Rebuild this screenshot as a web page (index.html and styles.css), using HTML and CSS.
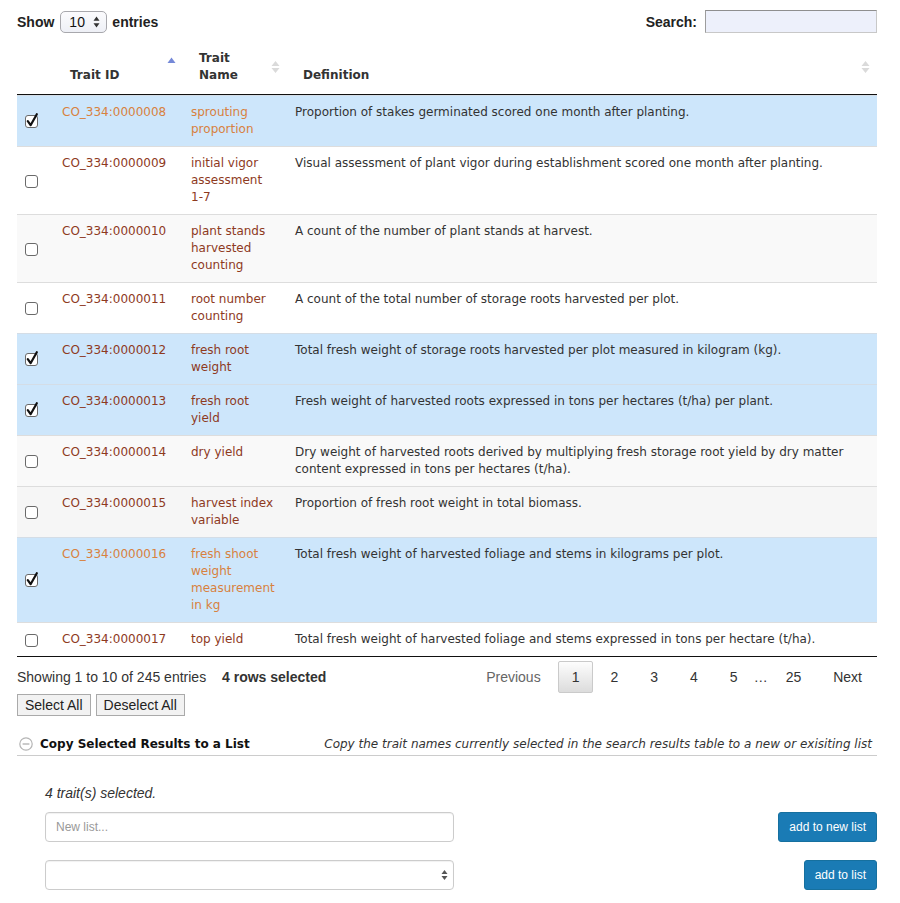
FILE: index.html
```html
<!DOCTYPE html>
<html>
<head>
<meta charset="utf-8">
<link rel="stylesheet" href="styles.css">
</head>
<body>
<div class="page">
  <div class="topbar">
    <label class="length">Show
      <span class="selectbox"><span class="selval">10</span>
        <svg class="updown" width="7" height="12" viewBox="0 0 7 12"><path d="M3.5 0.5 L6.5 4.8 L0.5 4.8 Z M0.5 7.2 L6.5 7.2 L3.5 11.5 Z" fill="#333"/></svg>
      </span> entries</label>
    <label class="search">Search: <span class="searchbox"></span></label>
  </div>

  <table class="traits">
    <colgroup>
      <col class="c-check"><col class="c-id"><col class="c-name"><col class="c-def">
    </colgroup>
    <thead>
      <tr>
        <th></th>
        <th class="sortable">Trait ID
          <svg class="sort" width="9" height="14" viewBox="0 0 9 14"><path d="M4.5 0.5 L8.5 6 L0.5 6 Z" fill="#7589d8"/></svg>
        </th>
        <th class="sortable">Trait<br>Name
          <svg class="sort" width="9" height="14" viewBox="0 0 9 14"><path d="M4.5 1 L8.5 6 L0.5 6 Z M0.5 8 L8.5 8 L4.5 13 Z" fill="#dadada"/></svg>
        </th>
        <th class="sortable">Definition
          <svg class="sort" width="9" height="14" viewBox="0 0 9 14"><path d="M4.5 1 L8.5 6 L0.5 6 Z M0.5 8 L8.5 8 L4.5 13 Z" fill="#dadada"/></svg>
        </th>
      </tr>
    </thead>
    <tbody>
      <tr class="odd selected">
        <td class="cb-cell"><span class="cb"><svg width="14" height="16" viewBox="0 0 14 16"><rect x="0.5" y="2.5" width="12" height="12" rx="2.5" fill="#fff" stroke="#6a6a6a"/><path d="M2.8 8.2 L5.6 12.2 L11.8 1.2" fill="none" stroke="#111" stroke-width="2.2" stroke-linecap="round" stroke-linejoin="round"/></svg></span></td>
        <td><a class="lnk hot">CO_334:0000008</a></td>
        <td class="name"><a class="lnk hot">sprouting proportion</a></td>
        <td>Proportion of stakes germinated scored one month after planting.</td>
      </tr>
      <tr class="even">
        <td class="cb-cell"><span class="cb"><svg width="14" height="16" viewBox="0 0 14 16"><rect x="0.5" y="2.5" width="12" height="12" rx="2.5" fill="#fff" stroke="#6a6a6a"/></svg></span></td>
        <td><a class="lnk">CO_334:0000009</a></td>
        <td class="name"><a class="lnk">initial vigor assessment 1-7</a></td>
        <td>Visual assessment of plant vigor during establishment scored one month after planting.</td>
      </tr>
      <tr class="odd">
        <td class="cb-cell"><span class="cb"><svg width="14" height="16" viewBox="0 0 14 16"><rect x="0.5" y="2.5" width="12" height="12" rx="2.5" fill="#fff" stroke="#6a6a6a"/></svg></span></td>
        <td><a class="lnk">CO_334:0000010</a></td>
        <td class="name"><a class="lnk">plant stands harvested counting</a></td>
        <td>A count of the number of plant stands at harvest.</td>
      </tr>
      <tr class="even">
        <td class="cb-cell"><span class="cb"><svg width="14" height="16" viewBox="0 0 14 16"><rect x="0.5" y="2.5" width="12" height="12" rx="2.5" fill="#fff" stroke="#6a6a6a"/></svg></span></td>
        <td><a class="lnk">CO_334:0000011</a></td>
        <td class="name"><a class="lnk">root number counting</a></td>
        <td>A count of the total number of storage roots harvested per plot.</td>
      </tr>
      <tr class="odd selected">
        <td class="cb-cell"><span class="cb"><svg width="14" height="16" viewBox="0 0 14 16"><rect x="0.5" y="2.5" width="12" height="12" rx="2.5" fill="#fff" stroke="#6a6a6a"/><path d="M2.8 8.2 L5.6 12.2 L11.8 1.2" fill="none" stroke="#111" stroke-width="2.2" stroke-linecap="round" stroke-linejoin="round"/></svg></span></td>
        <td><a class="lnk">CO_334:0000012</a></td>
        <td class="name"><a class="lnk">fresh root weight</a></td>
        <td>Total fresh weight of storage roots harvested per plot measured in kilogram (kg).</td>
      </tr>
      <tr class="even selected">
        <td class="cb-cell"><span class="cb"><svg width="14" height="16" viewBox="0 0 14 16"><rect x="0.5" y="2.5" width="12" height="12" rx="2.5" fill="#fff" stroke="#6a6a6a"/><path d="M2.8 8.2 L5.6 12.2 L11.8 1.2" fill="none" stroke="#111" stroke-width="2.2" stroke-linecap="round" stroke-linejoin="round"/></svg></span></td>
        <td><a class="lnk">CO_334:0000013</a></td>
        <td class="name"><a class="lnk">fresh root yield</a></td>
        <td>Fresh weight of harvested roots expressed in tons per hectares (t/ha) per plant.</td>
      </tr>
      <tr class="odd">
        <td class="cb-cell"><span class="cb"><svg width="14" height="16" viewBox="0 0 14 16"><rect x="0.5" y="2.5" width="12" height="12" rx="2.5" fill="#fff" stroke="#6a6a6a"/></svg></span></td>
        <td><a class="lnk">CO_334:0000014</a></td>
        <td class="name"><a class="lnk">dry yield</a></td>
        <td>Dry weight of harvested roots derived by multiplying fresh storage root yield by dry matter content expressed in tons per hectares (t/ha).</td>
      </tr>
      <tr class="even hover">
        <td class="cb-cell"><span class="cb"><svg width="14" height="16" viewBox="0 0 14 16"><rect x="0.5" y="2.5" width="12" height="12" rx="2.5" fill="#fff" stroke="#6a6a6a"/></svg></span></td>
        <td><a class="lnk">CO_334:0000015</a></td>
        <td class="name"><a class="lnk">harvest index variable</a></td>
        <td>Proportion of fresh root weight in total biomass.</td>
      </tr>
      <tr class="odd selected">
        <td class="cb-cell"><span class="cb"><svg width="14" height="16" viewBox="0 0 14 16"><rect x="0.5" y="2.5" width="12" height="12" rx="2.5" fill="#fff" stroke="#6a6a6a"/><path d="M2.8 8.2 L5.6 12.2 L11.8 1.2" fill="none" stroke="#111" stroke-width="2.2" stroke-linecap="round" stroke-linejoin="round"/></svg></span></td>
        <td><a class="lnk hot">CO_334:0000016</a></td>
        <td class="name"><a class="lnk hot">fresh shoot weight measurement in kg</a></td>
        <td>Total fresh weight of harvested foliage and stems in kilograms per plot.</td>
      </tr>
      <tr class="even">
        <td class="cb-cell"><span class="cb"><svg width="14" height="16" viewBox="0 0 14 16"><rect x="0.5" y="2.5" width="12" height="12" rx="2.5" fill="#fff" stroke="#6a6a6a"/></svg></span></td>
        <td><a class="lnk">CO_334:0000017</a></td>
        <td class="name"><a class="lnk">top yield</a></td>
        <td>Total fresh weight of harvested foliage and stems expressed in tons per hectare (t/ha).</td>
      </tr>
    </tbody>
  </table>

  <div class="tablefoot">
    <div class="info">Showing 1 to 10 of 245 entries <span class="selinfo">4 rows selected</span></div>
    <div class="paginate">
      <span class="pbtn disabled">Previous</span>
      <span class="pbtn current">1</span>
      <span class="pbtn">2</span>
      <span class="pbtn">3</span>
      <span class="pbtn">4</span>
      <span class="pbtn">5</span>
      <span class="ellipsis">…</span>
      <span class="pbtn">25</span>
      <span class="pbtn">Next</span>
    </div>
  </div>

  <div class="selbtns">
    <button class="plain">Select All</button>
    <button class="plain">Deselect All</button>
  </div>

  <div class="copyhead">
    <div class="copytitle">
      <svg class="minus" width="14" height="14" viewBox="0 0 14 14"><circle cx="7" cy="7" r="6.2" fill="#fff" stroke="#b5b5b5" stroke-width="1.2"/><rect x="3.6" y="6.3" width="6.8" height="1.4" fill="#b5b5b5"/></svg>
      <span>Copy Selected Results to a List</span>
    </div>
    <div class="copynote">Copy the trait names currently selected in the search results table to a new or exisiting list</div>
  </div>

  <div class="listpanel">
    <div class="count">4 trait(s) selected.</div>
    <div class="formrow">
      <div class="field">New list...</div>
      <button class="primary">add to new list</button>
    </div>
    <div class="formrow">
      <div class="field select">
        <svg width="7" height="12" viewBox="0 0 7 12"><path d="M3.5 1 L6.5 5 L0.5 5 Z M0.5 7 L6.5 7 L3.5 11 Z" fill="#555"/></svg>
      </div>
      <button class="primary">add to list</button>
    </div>
  </div>
</div>
</body>
</html>
```

FILE: styles.css
```css
html, body {
  margin: 0;
  padding: 0;
  background: #fff;
}
body {
  font-family: "Liberation Sans", Arial, sans-serif;
  font-size: 14px;
  color: #333;
}
.page {
  padding: 10px 23px 10px 17px;
  width: 860px;
}

/* top bar */
.topbar {
  display: flex;
  justify-content: space-between;
  align-items: center;
  height: 23px;
}
.length, .search {
  font-weight: bold;
  display: flex;
  align-items: center;
  color: #222;
}
.selectbox {
  display: inline-flex;
  align-items: center;
  justify-content: space-between;
  box-sizing: border-box;
  width: 47px;
  height: 22px;
  margin: 0 5px 0 6px;
  padding: 0 6px 0 8px;
  border: 1px solid #a8a8ad;
  border-radius: 5px;
  background: linear-gradient(#fbfbfd, #eef0f6);
  font-weight: normal;
  color: #111;
}
.searchbox {
  display: inline-block;
  box-sizing: border-box;
  width: 172px;
  height: 23px;
  margin-left: 8px;
  border: 1px solid #c8c8c8;
  border-top-color: #8f8f8f;
  border-left-color: #9d9d9d;
  background: #edf0fb;
}

/* table */
.traits {
  width: 860px;
  margin-top: 7px;
  table-layout: fixed;
  border-collapse: separate;
  border-spacing: 0;
  font-family: "DejaVu Sans", Verdana, sans-serif;
  font-size: 12px;
  line-height: 17px;
  color: #333;
  border-bottom: 1px solid #111;
}
.c-check { width: 37px; }
.c-id { width: 129px; }
.c-name { width: 104px; }
.c-def { width: 590px; }

.traits th {
  position: relative;
  text-align: left;
  vertical-align: bottom;
  font-weight: bold;
  color: #333;
  padding: 10px 18px 10px 16px;
  border-bottom: 1px solid #111;
}
.traits th .sort {
  position: absolute;
  right: 7px;
  top: 50%;
  margin-top: -7px;
}
.traits th:nth-child(2) .sort { margin-top: -10px; }

.traits td {
  padding: 8px 8px;
  vertical-align: top;
  border-top: 1px solid #ddd;
}
.traits td.name { padding-right: 10.5px; }
.traits tr.odd td { background: #f9f9f9; }
.traits tr.even td { background: #fff; }
.traits tr.hover td { background: #f6f6f6; }
.traits tr.selected td { background: #cde6fb; border-top-color: #d4dde6; }

.traits td.cb-cell {
  vertical-align: middle;
  padding: 0 0 0 8px;
}
.cb {
  display: block;
  width: 14px;
  height: 16px;
}
.cb svg { display: block; }

.lnk {
  color: #8e3a1e;
  text-decoration: none;
}
.lnk.hot { color: #d8813e; }

/* footer */
.tablefoot {
  display: flex;
  justify-content: space-between;
  align-items: center;
  height: 34px;
  margin-top: 3px;
}
.info { color: #333; }
.selinfo {
  font-weight: bold;
  margin-left: 12px;
}
.paginate {
  display: flex;
  align-items: center;
}
.pbtn {
  box-sizing: border-box;
  height: 32px;
  line-height: 30px;
  padding: 0 14px;
  margin-left: 2px;
  border: 1px solid transparent;
  border-radius: 2px;
  color: #333;
}
.pbtn.disabled { color: #666; }
.pbtn.current {
  border-color: #cacaca;
  background: linear-gradient(#fdfdfd, #dcdcdc);
  padding: 0 13px;
}
.ellipsis {
  padding: 0 1px;
  color: #333;
}

.selbtns {
  display: flex;
  gap: 5px;
}
.plain {
  font-family: "Liberation Sans", Arial, sans-serif;
  font-size: 14px;
  color: #222;
  height: 22px;
  padding: 0 7px;
  border: 1px solid #aaa;
  border-radius: 0;
  background: #f2f2f2;
}

.copyhead {
  display: flex;
  justify-content: space-between;
  align-items: center;
  margin-top: 16px;
  height: 23px;
  border-bottom: 1px solid #ccc;
  font-family: "DejaVu Sans", Verdana, sans-serif;
  font-size: 12px;
}
.copytitle {
  display: flex;
  align-items: center;
  gap: 7px;
  padding-left: 2px;
  font-weight: bold;
  color: #111;
}
.minus { display: block; }
.copynote {
  font-style: italic;
  color: #333;
  padding-right: 5px;
}

.listpanel {
  padding: 27px 0 0 28px;
}
.count {
  font-style: italic;
  color: #333;
  height: 20px;
  line-height: 20px;
}
.formrow {
  display: flex;
  justify-content: space-between;
  align-items: center;
  margin-top: 9px;
}
.formrow + .formrow { margin-top: 18px; }
.field {
  box-sizing: border-box;
  width: 409px;
  height: 30px;
  border: 1px solid #ccc;
  border-radius: 4px;
  padding: 0 10px;
  line-height: 28px;
  font-size: 12px;
  color: #999;
  background: #fff;
  box-shadow: inset 0 1px 1px rgba(0,0,0,0.06);
}
.field.select {
  display: flex;
  justify-content: flex-end;
  align-items: center;
  padding-right: 5px;
}
.field.select svg { display: block; }
.primary {
  font-family: "Liberation Sans", Arial, sans-serif;
  font-size: 12px;
  color: #fff;
  height: 30px;
  padding: 0 10px;
  border: 1px solid #16709f;
  border-radius: 3px;
  background: #1a7bb5;
}
```
